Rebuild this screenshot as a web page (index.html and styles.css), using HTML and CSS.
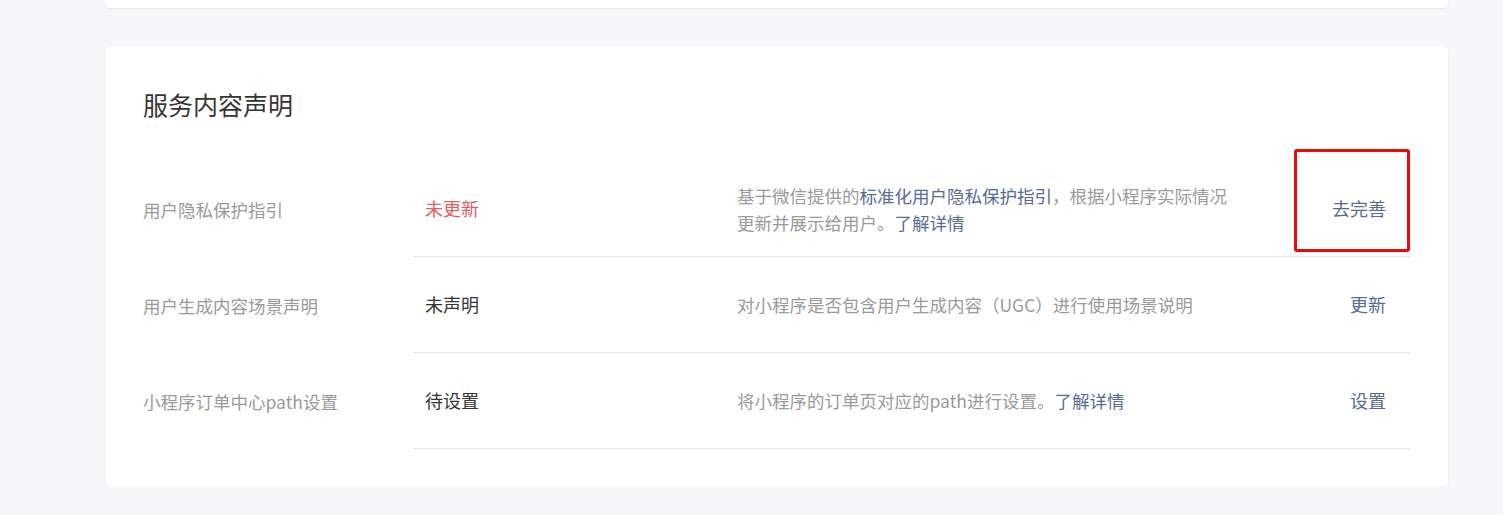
FILE: index.html
```html
<!DOCTYPE html>
<html lang="zh-CN">
<head>
    <meta charset="UTF-8">
    <meta name="viewport" content="width=device-width, initial-scale=1.0">
    <title>服务内容声明</title>
    <link rel="stylesheet" href="styles.css">
</head>
<body>
    <div class="page">
        <div class="card card-top"></div>
        <div class="card">
            <h2 class="card-title">服务内容声明</h2>
            <div class="list">
                <div class="row">
                    <div class="row-label">用户隐私保护指引</div>
                    <div class="row-body">
                        <div class="row-status status-red">未更新</div>
                        <div class="row-desc">基于微信提供的<a href="#">标准化用户隐私保护指引</a>，根据小程序实际情况更新并展示给用户。<a href="#">了解详情</a></div>
                        <div class="row-action">
                            <a href="#" class="mark">去完善</a>
                        </div>
                    </div>
                </div>
                <div class="row">
                    <div class="row-label">用户生成内容场景声明</div>
                    <div class="row-body">
                        <div class="row-status">未声明</div>
                        <div class="row-desc">对小程序是否包含用户生成内容（UGC）进行使用场景说明</div>
                        <div class="row-action"><a href="#">更新</a></div>
                    </div>
                </div>
                <div class="row">
                    <div class="row-label">小程序订单中心path设置</div>
                    <div class="row-body">
                        <div class="row-status">待设置</div>
                        <div class="row-desc">将小程序的订单页对应的path进行设置。<a href="#">了解详情</a></div>
                        <div class="row-action"><a href="#">设置</a></div>
                    </div>
                </div>
            </div>
        </div>
    </div>
</body>
</html>
```

FILE: styles.css
```css
body {
    margin: 0;
    background-color: #f6f7f9;
    font-family: "Noto Sans CJK SC", "Noto Sans", sans-serif;
    font-size: 18px;
    line-height: 27px;
    color: #353535;
}
a {
    color: #576b95;
    text-decoration: none;
}
.page {
    display: flex;
    flex-direction: column;
    gap: 38px;
    padding: 0 55px 0 105px;
}
.card {
    background: #fff;
    border-radius: 4px;
    box-shadow: 0 1px 2px rgba(0, 0, 0, 0.08);
    padding: 40px 38px 37px;
}
.card-top {
    height: 8px;
    padding: 0;
    border-radius: 0 0 4px 4px;
}
.card-title {
    margin: 0 0 39px;
    font-size: 25px;
    line-height: 36px;
    font-weight: normal;
    color: #353535;
}
.row {
    display: grid;
    grid-template-columns: 270px 1fr;
    height: 96px;
}
.row-label {
    display: flex;
    align-items: center;
    font-size: 17.5px;
    color: #9a9a9a;
}
.row-body {
    display: flex;
    align-items: center;
    border-bottom: 1px solid #e7e7eb;
}
.row-status {
    width: 288px;
    padding: 0 12px;
}
.status-red {
    color: #e15f63;
}
.row-desc {
    width: 498px;
    padding: 0 8px 0 12px;
    font-size: 17.5px;
    color: #9a9a9a;
}
.row-action {
    flex: 1;
    display: flex;
    justify-content: flex-end;
    padding-right: 24px;
}
.mark {
    position: relative;
}
.mark::after {
    content: "";
    position: absolute;
    left: -38px;
    right: -24px;
    top: -46px;
    bottom: -30px;
    border: 3px solid #ee0a0a;
    border-radius: 3px;
}
```
